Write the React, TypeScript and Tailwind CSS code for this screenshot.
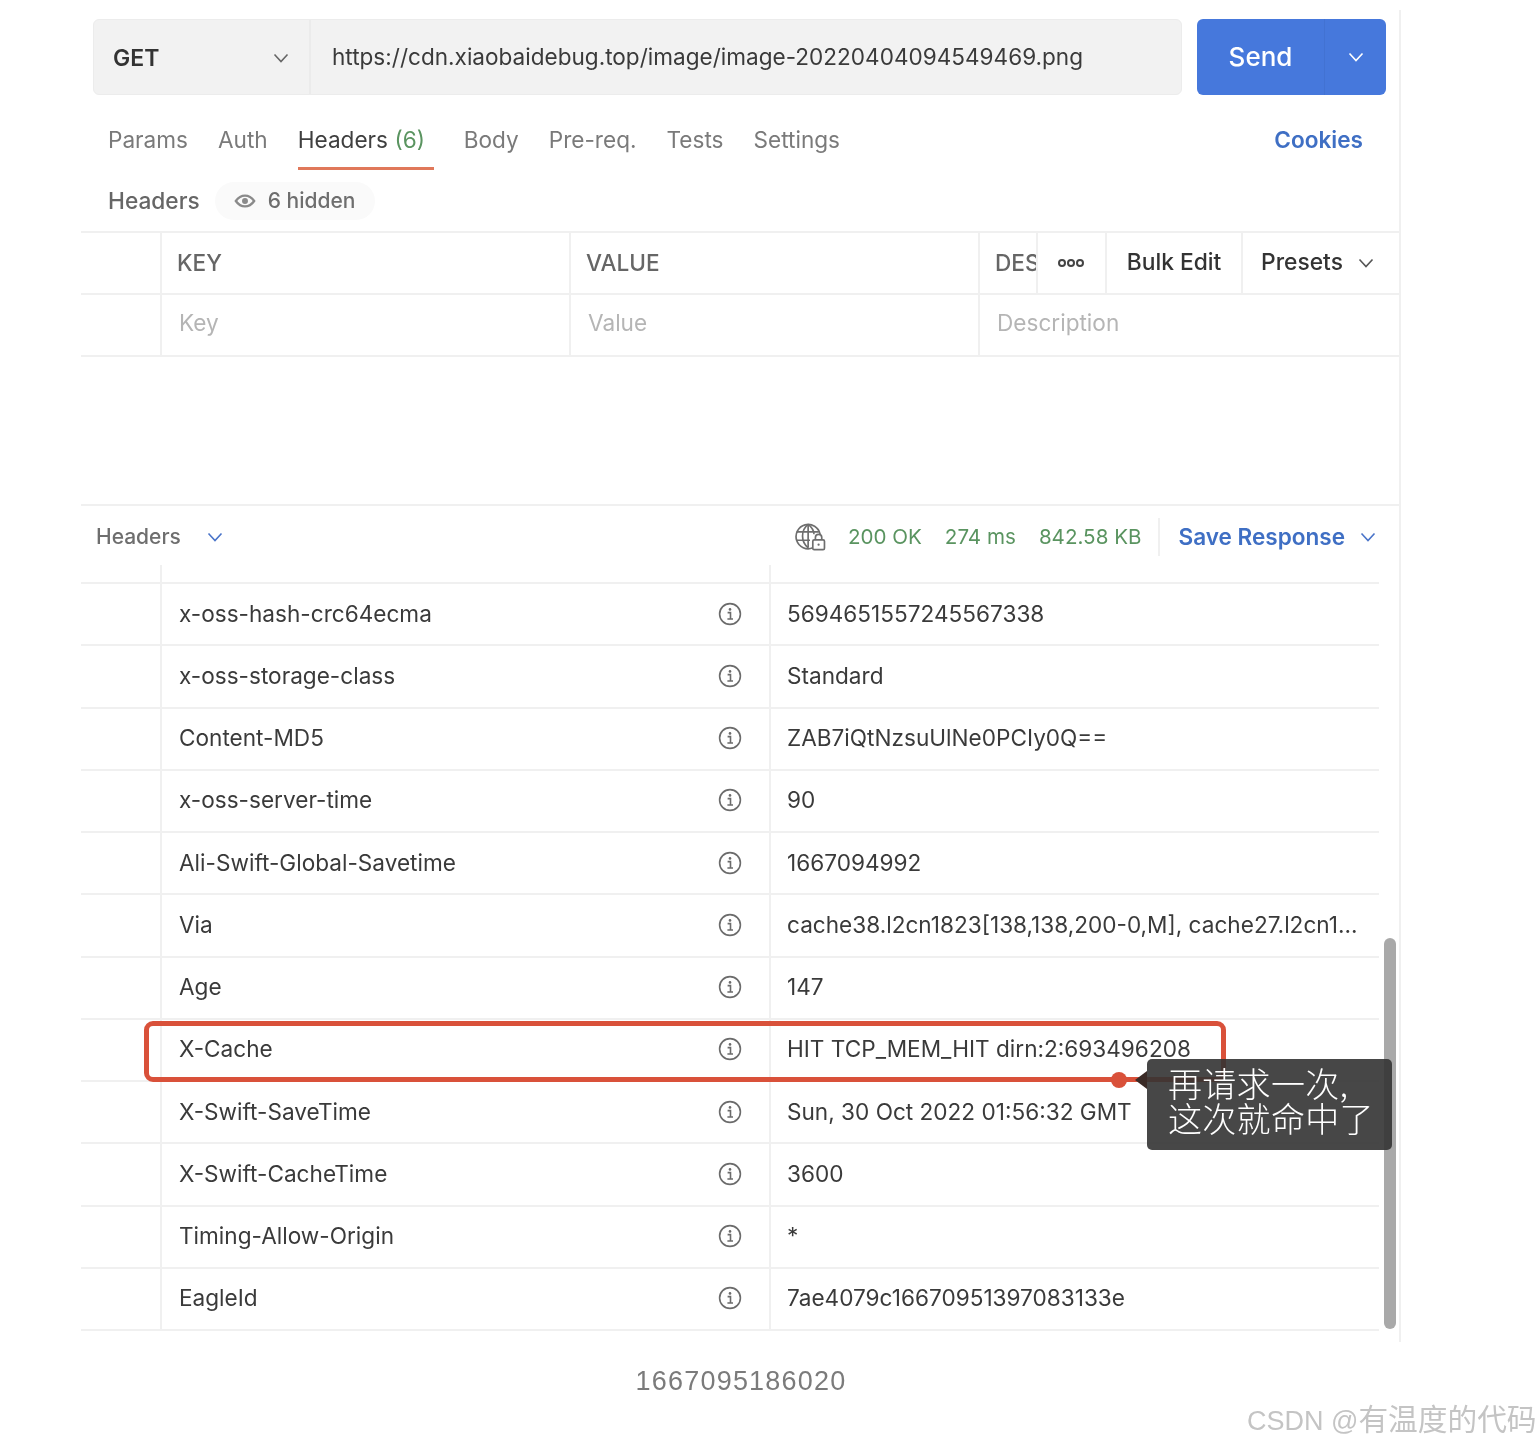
import React from "react";

const Chevron = ({ className = "", size = 18 }: { className?: string; size?: number }) => (
  <svg width={size} height={size} viewBox="0 0 18 18" fill="none" className={className}>
    <path d="M2.5 5.5 9 12.5 15.5 5.5" stroke="currentColor" strokeWidth="1.6" />
  </svg>
);

const Info = () => (
  <svg width="24" height="24" viewBox="0 0 24 24" fill="none" className="text-[#6b6b6b]">
    <circle cx="12" cy="12" r="10.4" stroke="currentColor" strokeWidth="1.6" />
    <circle cx="12" cy="7.4" r="1.3" fill="currentColor" />
    <path d="M9.6 10.6H12.5V16.6M9.4 17H15" stroke="currentColor" strokeWidth="1.6" />
  </svg>
);

const Eye = () => (
  <svg width="22" height="14" viewBox="0 0 24 16" fill="none" className="text-[#8a8a8a]">
    <path d="M1.5 8C5 3 8.5 1.8 12 1.8S19 3 22.5 8C19 13 15.5 14.2 12 14.2S5 13 1.5 8Z" stroke="currentColor" strokeWidth="2.6" />
    <circle cx="12" cy="8" r="3.4" fill="currentColor" />
  </svg>
);

const GlobeLock = () => (
  <svg width="32" height="28" viewBox="0 0 34 30" fill="none" className="text-[#6e6e6e]">
    <path d="M20 26.6A13 13 0 1 1 27.8 12" stroke="currentColor" strokeWidth="1.8" />
    <path d="M15 1.5C10.5 5 9 9.5 9 14s1.5 9 6 12.5M15 1.5C19 4.5 21 8 21.3 12M2.6 9.5H26.5M2.2 18.5H17" stroke="currentColor" strokeWidth="1.8" />
    <path d="M15 1.5V26.5" stroke="currentColor" strokeWidth="1.8" />
    <rect x="20" y="18" width="12.5" height="10.5" rx="1.5" fill="white" stroke="currentColor" strokeWidth="1.8" />
    <path d="M22.8 18v-2.4a3.4 3.4 0 0 1 6.8 0V18" stroke="currentColor" strokeWidth="1.8" />
    <circle cx="26.2" cy="23.2" r="1.2" fill="currentColor" />
  </svg>
);

const tabs = ["Params", "Auth"];
const tabs2 = ["Body", "Pre-req.", "Tests", "Settings"];

const rows: [string, string][] = [
  ["x-oss-hash-crc64ecma", "5694651557245567338"],
  ["x-oss-storage-class", "Standard"],
  ["Content-MD5", "ZAB7iQtNzsuUlNe0PCIy0Q=="],
  ["x-oss-server-time", "90"],
  ["Ali-Swift-Global-Savetime", "1667094992"],
  ["Via", "cache38.l2cn1823[138,138,200-0,M], cache27.l2cn1..."],
  ["Age", "147"],
  ["X-Cache", "HIT TCP_MEM_HIT dirn:2:693496208"],
  ["X-Swift-SaveTime", "Sun, 30 Oct 2022 01:56:32 GMT"],
  ["X-Swift-CacheTime", "3600"],
  ["Timing-Allow-Origin", "*"],
  ["EagleId", "7ae4079c16670951397083133e"],
];

export default function App() {
  return (
    <div className="relative w-[1540px] h-[1446px] overflow-hidden bg-white font-['Inter',sans-serif] text-[#3a3a3a] blur-[0.4px]">
      <div className="ml-[81px] mt-[10px] w-[1320px] h-[1332px] border-r-2 border-[#f0f0f0] flex flex-col">
        {/* Request bar */}
        <div className="flex mt-[9px] ml-[12px] h-[76px]">
          <div className="w-[1089px] flex rounded-md bg-[#f2f2f2] border border-[#ececec]">
            <div className="w-[217px] flex items-center justify-between pl-[19px] pr-[19px] pt-[2px] border-r-2 border-[#ebebeb]">
              <span className="text-[23px] font-semibold text-[#333]">GET</span>
              <Chevron className="text-[#666]" />
            </div>
            <div className="flex items-center pl-[21px] text-[22.57px] text-[#3a3a3a]">
              https://cdn.xiaobaidebug.top/image/image-20220404094549469.png
            </div>
          </div>
          <div className="ml-[15px] w-[189px] flex rounded-md bg-[#4678dc] text-white">
            <div className="w-[128px] flex items-center justify-center pb-[2px] text-[26px] font-medium border-r border-[#4272d2]">Send</div>
            <div className="flex-1 flex items-center justify-center"><Chevron /></div>
          </div>
        </div>

        {/* Tabs */}
        <div className="flex items-start h-[75px] pl-[27px] pr-[36px] text-[22.6px] text-[#7a7a7a]">
          {tabs.map((t) => (
            <div key={t} className="mr-[30px] pt-[28px]">{t}</div>
          ))}
          <div className="mr-[30px] pt-[28px] h-[75px] border-b-[3px] border-[#e0785a] w-[136px] text-[#3f3f3f] whitespace-nowrap">
            Headers <span className="text-[#5a9460]">(6)</span>
          </div>
          {tabs2.map((t) => (
            <div key={t} className="mr-[30px] pt-[28px]">{t}</div>
          ))}
          <div className="ml-auto pt-[28px] font-semibold text-[#3f6fc4]">Cookies</div>
        </div>

        {/* Sub header */}
        <div className="flex items-center h-[61px] pl-[27px]">
          <span className="text-[22.7px] font-medium text-[#666] mt-[2px]">Headers</span>
          <div className="ml-[15px] flex items-center gap-[12px] h-[38px] pl-[19px] pr-[20px] rounded-full bg-[#fafafa] text-[21px] font-medium text-[#6e6e6e]">
            <Eye />
            <span>6 hidden</span>
          </div>
        </div>

        {/* Request table */}
        <div className="border-t-2 border-b-2 border-[#f0f0f0] flex h-[64px]">
          <div className="w-[81px] border-r-2 border-[#f0f0f0]" />
          <div className="w-[409px] border-r-2 border-[#f0f0f0] flex items-center pl-[15px] pb-[1px] text-[22.6px] font-medium text-[#666]">KEY</div>
          <div className="w-[409px] border-r-2 border-[#f0f0f0] flex items-center pl-[15px] pb-[1px] text-[22.6px] font-medium text-[#666]">VALUE</div>
          <div className="w-[58px] border-r-2 border-[#f0f0f0] flex items-center pl-[15px] pb-[1px] text-[22.6px] font-medium text-[#666] overflow-hidden">DESCRIPTION</div>
          <div className="w-[69px] border-r-2 border-[#f0f0f0] flex items-center justify-center gap-[1px] pb-[1px] pr-[1px]">
            {[0, 1, 2].map((i) => (
              <span key={i} className="w-[8px] h-[8px] rounded-full border-2 border-[#444]" />
            ))}
          </div>
          <div className="w-[136px] border-r-2 border-[#f0f0f0] flex items-center justify-center pb-[1px] text-[22.8px] font-medium text-[#333]">Bulk Edit</div>
          <div className="flex-1 flex items-center pl-[18px] pb-[1px] gap-[14px] text-[22.8px] font-medium text-[#333]">
            <span>Presets</span>
            <Chevron className="text-[#555]" />
          </div>
        </div>
        <div className="flex h-[62px] border-b-2 border-[#f0f0f0] text-[22.6px] text-[#b5b5b5]">
          <div className="w-[81px] border-r-2 border-[#f0f0f0]" />
          <div className="w-[409px] border-r-2 border-[#f0f0f0] flex items-center pl-[17px] pb-[5px]">Key</div>
          <div className="w-[409px] border-r-2 border-[#f0f0f0] flex items-center pl-[17px] pb-[5px]">Value</div>
          <div className="flex-1 flex items-center pl-[17px] pb-[5px]">Description</div>
        </div>

        {/* Response bar */}
        <div className="mt-[147px] border-t-2 border-[#f0f0f0] h-[61px] flex items-center pl-[15px] pr-[22px] pt-[3px]">
          <span className="text-[21px] font-medium text-[#6e6e6e]">Headers</span>
          <Chevron className="ml-[25px] text-[#4a74c9]" />
          <div className="ml-auto"><GlobeLock /></div>
          <span className="ml-[22px] text-[20.6px] text-[#5a9460]">200 OK</span>
          <span className="ml-[23px] text-[20.6px] text-[#5a9460]">274 ms</span>
          <span className="ml-[23px] text-[20.6px] text-[#5a9460]">842.58 KB</span>
          <div className="ml-[17px] w-[2px] h-[38px] bg-[#f0f0f0]" />
          <span className="ml-[18px] text-[22.55px] font-semibold text-[#3f6fc4]">Save Response</span>
          <Chevron className="ml-[14px] text-[#4a74c9]" />
        </div>

        {/* Response table */}
        <div className="w-[1298px] h-[19px] flex border-b-2 border-[#f0f0f0]">
          <div className="w-[81px] border-r-2 border-[#f0f0f0]" />
          <div className="w-[609px] border-r-2 border-[#f0f0f0]" />
        </div>
        {rows.map(([k, v]) => (
          <div key={k} className="w-[1298px] h-[62.25px] flex border-b-2 border-[#f0f0f0] text-[22.6px]">
            <div className="w-[81px] border-r-2 border-[#f0f0f0]" />
            <div className="w-[609px] border-r-2 border-[#f0f0f0] flex items-center justify-between pl-[17px] pr-[27px] pb-[1px]">
              <span>{k}</span>
              <Info />
            </div>
            <div className="flex-1 flex items-center pl-[16px] pb-[1px] whitespace-nowrap overflow-hidden">{v}</div>
          </div>
        ))}
      </div>

      {/* Footer */}
      <div className="mt-[23px] w-[1482px] text-center font-['Liberation_Sans',sans-serif] text-[27px] tracking-[1.2px] text-[#7b7b7b] leading-[32px]">
        1667095186020
      </div>

      {/* Scrollbar */}
      <div className="absolute left-[1384px] top-[938px] w-[12px] h-[391px] rounded-full bg-[#a9a9a9]" />

      {/* Annotation */}
      <div className="absolute left-[144px] top-[1021px] w-[1082px] h-[61px] rounded-[9px] border-[5px] border-[#d9513a]" />
      <div className="absolute left-[1111px] top-[1072px] w-[16px] h-[16px] rounded-full bg-[#d9513a]" />
      <div className="absolute left-[1135px] top-[1071px] w-0 h-0 border-y-[9px] border-y-transparent border-r-[12px] border-r-[#3a2a26]" />
      <div className="absolute left-[1147px] top-[1059px] w-[245px] h-[91px] rounded-[5px] bg-[#333]/90 pl-[21px] pt-[6px] text-white font-['Noto_Sans_CJK_SC',sans-serif] font-light text-[34px] leading-[35px] tracking-[0.3px] whitespace-nowrap">
        再请求一次,
        <br />
        这次就命中了
      </div>

      {/* Watermark */}
      <div className="absolute left-[1247px] top-[1400px] font-['Liberation_Sans','Noto_Sans_CJK_SC',sans-serif] text-[29.7px] leading-[40px] text-[#c4c4c4] whitespace-nowrap">
        <span className="text-[27px]">CSDN @</span>有温度的代码
      </div>
    </div>
  );
}
